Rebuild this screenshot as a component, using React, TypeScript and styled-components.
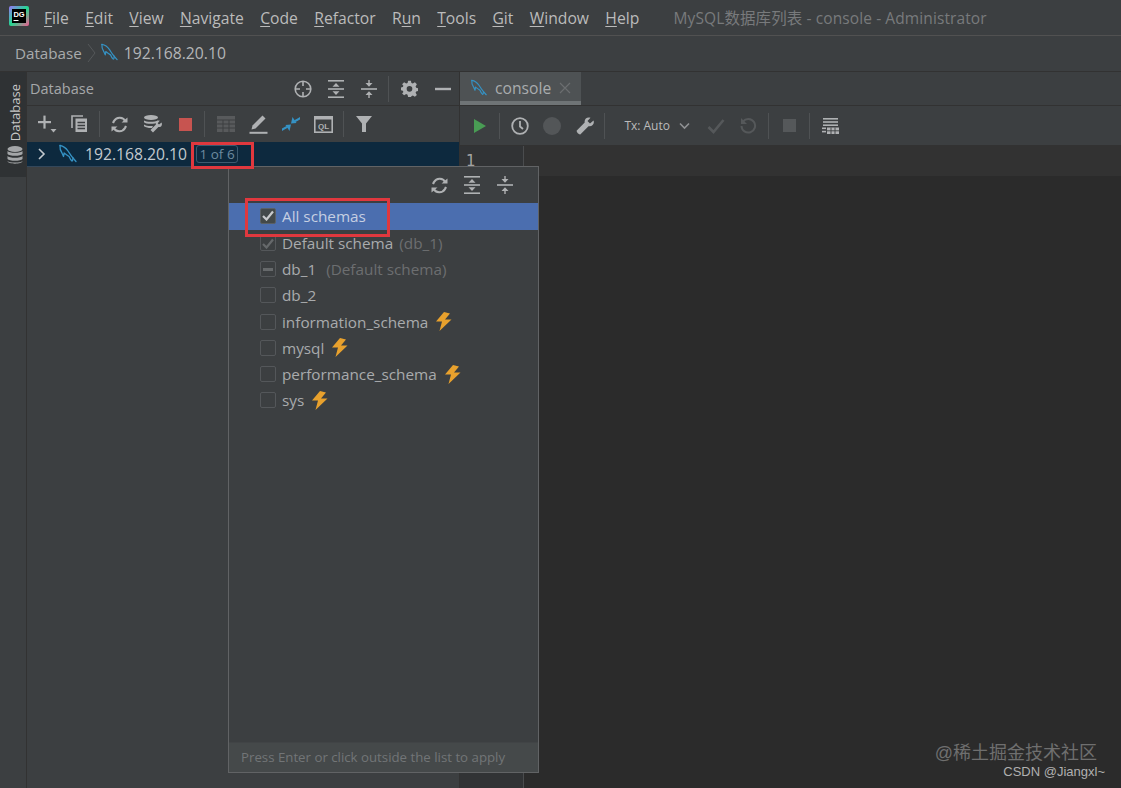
import React from "react"
import styled, { createGlobalStyle } from "styled-components"

const GlobalStyle = createGlobalStyle`
  html, body { margin: 0; height: 100%; background: #3c3f41; overflow: hidden; }
  #root { height: 100%; }
  * { box-sizing: border-box; }
`

const FONT = `"Open Sans", "Noto Sans", "Noto Sans CJK SC", sans-serif`

const Root = styled.div`
  position: relative;
  height: 788px;
  width: 1121px;
  display: flex;
  flex-direction: column;
  overflow: hidden;
  background: #3c3f41;
  color: #bbbbbb;
  font-family: ${FONT};
`

/* menu bar */
const MenuBar = styled.div`
  height: 36px;
  flex: none;
  display: flex;
  align-items: center;
  padding-left: 9px;
  border-bottom: 1px solid #515151;
  font-size: 15.7px;
`
const Logo = styled.svg`
  width: 20px;
  height: 20px;
  margin-right: 15px;
  margin-top: -4px;
`
const MenuItem = styled.span`
  margin-right: 16.3px;
  color: #bbbbbb;
  u { text-underline-offset: 2px; text-decoration-thickness: 1px; }
`
const WindowTitle = styled.span`
  margin-left: 18px;
  color: #787a7c;
  font-size: 15.5px;
  letter-spacing: 0.1px;
`

/* breadcrumb */
const Breadcrumb = styled.div`
  height: 36px;
  flex: none;
  display: flex;
  align-items: center;
  padding: 0 0 2px 15px;
  border-bottom: 1px solid #323232;
  font-size: 15.2px;
  color: #a9abad;
`
const CrumbArrow = styled.svg`
  width: 10px;
  height: 20px;
  margin: 0 3px 0 5px;
`
const CrumbHost = styled.span`
  margin-left: 5px;
  font-size: 15.7px;
  color: #b4b6b8;
`

/* main area */
const Main = styled.div`
  flex: 1;
  display: flex;
  min-height: 0;
`
const Strip = styled.div`
  width: 27px;
  flex: none;
  border-right: 1px solid #323232;
`
const StripTab = styled.div`
  height: 105px;
  background: #2f3234;
  display: flex;
  flex-direction: column;
  align-items: center;
  justify-content: flex-end;
  gap: 5px;
  padding: 0 0 13px 3px;
`
const StripLabel = styled.span`
  writing-mode: vertical-rl;
  transform: rotate(180deg);
  font-size: 13px;
  color: #c8c8c8;
`
const ToolWindow = styled.div`
  width: 433px;
  flex: none;
  display: flex;
  flex-direction: column;
  border-right: 1px solid #323232;
`
const ToolHeader = styled.div`
  height: 34px;
  flex: none;
  display: flex;
  align-items: center;
  padding-left: 3px;
  border-bottom: 1px solid #323232;
`
const ToolTitle = styled.span`
  flex: 1;
  font-size: 14.5px;
  color: #a6a8aa;
`
const Toolbar = styled.div<{ $height: number; $pad: number }>`
  height: ${p => p.$height}px;
  flex: none;
  display: flex;
  align-items: center;
  padding-left: ${p => p.$pad}px;
`
const IconSlot = styled.span<{ $w?: number }>`
  width: ${p => p.$w ?? 32.6}px;
  height: 24px;
  flex: none;
  display: flex;
  align-items: center;
  justify-content: center;
`
const Sep = styled.span`
  width: 1px;
  height: 26px;
  background: #4f5254;
  margin: 0 4px 0 3px;
  flex: none;
`
const TreeRow = styled.div`
  height: 25px;
  flex: none;
  display: flex;
  align-items: center;
  background: #0d293e;
  padding-left: 10px;
  border-bottom: 1px solid #33475a;
  font-size: 15.7px;
  color: #c3c9ce;
`
const TreeIcon = styled.span`
  margin-left: 12px;
  display: flex;
`
const TreeHost = styled.span`
  margin-left: 7px;
`
const CountBadge = styled.span`
  margin-left: 9px;
  height: 18px;
  width: 42px;
  flex: none;
  border: 1px solid #3c5a70;
  border-radius: 3px;
  font-size: 13.5px;
  color: #6e8ba0;
  display: flex;
  align-items: center;
  justify-content: center;
  white-space: nowrap;
`
const Editor = styled.div`
  flex: 1;
  display: flex;
  flex-direction: column;
  min-width: 0;
`
const TabBar = styled.div`
  height: 34px;
  flex: none;
  display: flex;
  border-bottom: 1px solid #323232;
`
const Tab = styled.div`
  width: 121px;
  display: flex;
  align-items: center;
  gap: 7px;
  padding: 3px 0 0 10px;
  background: #4e5254;
  border-bottom: 4px solid #6f7476;
  font-size: 15.7px;
  color: #a9acae;
`
const TabClose = styled.svg`
  width: 12px;
  height: 12px;
  margin-left: 1px;
`
const TxLabel = styled.span`
  font-size: 12px;
  color: #bbbbbb;
  margin-left: 15px;
  width: 45px;
  flex: none;
  white-space: nowrap;
`
const CodeArea = styled.div`
  flex: 1;
  display: flex;
  border-top: 1px solid #323232;
  min-height: 0;
`
const Gutter = styled.div`
  width: 64px;
  flex: none;
  background: #313335;
  border-right: 1px solid #4a4c4e;
  padding: 6px 0 0 6px;
  font-size: 15px;
  color: #a4a3a3;
  font-family: "DejaVu Sans", sans-serif;
`
const CodeBody = styled.div`
  flex: 1;
  background: #2b2b2b;
`
const CaretLine = styled.div`
  height: 30px;
  background: #323232;
`

/* schema popup */
const Popup = styled.div`
  position: absolute;
  left: 228px;
  top: 166px;
  width: 311px;
  height: 607px;
  background: #3c3f41;
  border: 1px solid #616365;
  display: flex;
  flex-direction: column;
`
const PopupHead = styled.div`
  height: 36px;
  flex: none;
  display: flex;
  align-items: center;
  justify-content: flex-end;
  padding-right: 17px;
`
const SchemaList = styled.div`
  flex: 1;
`
const SchemaRow = styled.div<{ $selected?: boolean }>`
  height: ${p => (p.$selected ? 27 : 26.2)}px;
  display: flex;
  align-items: center;
  gap: 6px;
  padding: 0 0 ${p => (p.$selected ? 2 : 0)}px 31px;
  font-size: 15.3px;
  white-space: nowrap;
  background: ${p => (p.$selected ? "#4b6eaf" : "transparent")};
  color: ${p => (p.$selected ? "#c6cfe2" : "#a9abad")};
`
const Hint = styled.span<{ $gap?: number }>`
  color: #6c6e70;
  margin-left: ${p => p.$gap ?? 0}px;
`
const CheckBox = styled.span<{ $tone: "on" | "dim" | "off" }>`
  width: 16px;
  height: 16px;
  flex: none;
  border-radius: 2px;
  display: flex;
  align-items: center;
  justify-content: center;
  background: ${p => (p.$tone === "on" ? "#43494a" : "transparent")};
  border: 1px solid ${p => (p.$tone === "on" ? "#5a6066" : "#54575a")};
`
const PopupFoot = styled.div`
  height: 30px;
  flex: none;
  display: flex;
  align-items: center;
  padding: 0 0 1px 12px;
  background: #45494a;
  border-top: 1px solid #414446;
  font-size: 13.25px;
  color: #727577;
`
const RedBox = styled.div<{ $l: number; $t: number; $w: number; $h: number }>`
  position: absolute;
  left: ${p => p.$l}px;
  top: ${p => p.$t}px;
  width: ${p => p.$w}px;
  height: ${p => p.$h}px;
  border: 3px solid #e0383e;
  pointer-events: none;
`
const Mark = styled.span<{ $r: number; $b: number; $size: number; $color: string }>`
  position: absolute;
  right: ${p => p.$r}px;
  bottom: ${p => p.$b}px;
  font-size: ${p => p.$size}px;
  color: ${p => p.$color};
  white-space: nowrap;
  font-family: "Liberation Sans", "Noto Sans CJK SC", sans-serif;
`

/* drawings */
const G = "#afb1b3"

const Dolphin = ({ size = 19 }: { size?: number }) => (
  <svg width={size} height={size} viewBox="0 0 20 20" fill="none" stroke="#3592c4" strokeWidth="1.3" strokeLinecap="round" strokeLinejoin="round">
    <path d="M2 1.5C5 2 8 4 10 7c1.5 2.2 3 5 5 7l3 3.5" />
    <path d="M2 1.5c-.3 3 .6 5.6 2 7.5l1.5 3.5c.4-1.5.6-2.5.6-3.5 1.6 1.2 3.4 2.5 5 3.5l1.5 3 1.4 1.5" />
    <path d="M15 14l-.4 2.5" />
  </svg>
)
const Target = () => (
  <svg width="18" height="18" viewBox="0 0 18 18" fill="none" stroke={G} strokeWidth="1.6">
    <circle cx="9" cy="9" r="7.8" />
    <path d="M9 1v5M9 12v5M1 9h5M12 9h5" />
  </svg>
)
const ExpandAll = () => (
  <svg width="16" height="18" viewBox="0 0 16 18" fill={G}>
    <rect x="0" y="0" width="16" height="1.6" />
    <rect x="0" y="16.4" width="16" height="1.6" />
    <rect x="0" y="8.2" width="16" height="1.6" />
    <path d="M8 3l3.5 3.8h-7zM8 15l3.5-3.8h-7z" />
  </svg>
)
const CollapseAll = () => (
  <svg width="16" height="18" viewBox="0 0 16 18" fill={G}>
    <rect x="0" y="8.2" width="16" height="1.6" />
    <path d="M8 6.8L4.5 3h7zM8 11.2L4.5 15h7z" />
    <rect x="7.3" y="0" width="1.4" height="3.5" />
    <rect x="7.3" y="14.5" width="1.4" height="3.5" />
  </svg>
)
const Gear = () => (
  <svg width="17" height="17" viewBox="0 0 24 24" fill={G}>
    <path d="M10 1h4l.7 3.3 2 .8 2.900-1.800 2.800 2.800-1.800 2.900.8 2 2.600.7v4l-2.600.7-.8 1.700 1.800 2.900-2.800 2.800-2.900-1.800-2 .8L14 24h-4l-.7-3.300-2-.8-2.900 1.800-2.800-2.800L3.400 17l-.8-1.700L0 14.600v-4l2.600-.6.800-2L1.600 6.100l2.800-2.800 2.900 1.800 2-.8zM12 8.500a4 4 0 100 8 4 4 0 000-8z" fillRule="evenodd" />
  </svg>
)
const Minus = () => (
  <svg width="16" height="4" viewBox="0 0 16 4"><rect width="16" height="2.4" y="0.8" fill={G} /></svg>
)
const PlusDrop = () => (
  <svg width="20" height="20" viewBox="0 0 20 20" fill={G}>
    <rect x="1" y="7" width="13" height="2.2" />
    <rect x="6.4" y="1.6" width="2.2" height="13" />
    <path d="M13.500 15h6l-3 3.500z" />
  </svg>
)
const CopyIcon = () => (
  <svg width="17" height="18" viewBox="0 0 17 18" fill="none" stroke={G} strokeWidth="1.6">
    <path d="M1 13V1h11" />
    <rect x="4.5" y="3.5" width="11.5" height="13.5" fill={G} stroke="none" />
    <path d="M6.500 7.500h7.500M6.500 10.500h7.500M6.500 13.500h7.500" stroke="#3c3f41" strokeWidth="1.3" />
  </svg>
)
const Refresh = () => (
  <svg width="17" height="17" viewBox="0 0 17 17" fill="none" stroke={G} strokeWidth="2.2">
    <path d="M14.500 5.500A6.500 6.500 0 003 5l-1 2" />
    <path d="M2.500 11.500A6.500 6.500 0 0014 12l1-2" />
    <path d="M10.500 6.500h6v-5zM6.500 10.500h-6v5z" fill={G} stroke="none" />
  </svg>
)
const DbWrench = () => (
  <svg width="20" height="20" viewBox="0 0 20 20" fill={G}>
    <ellipse cx="8" cy="3.5" rx="7" ry="2.5" />
    <path d="M1 6.500c2 1.800 11 1.800 14 0v1.800c-3 2-12 2-14 0zM1 10.500c2 1.600 6 1.800 9 1.500l-1 2c-3 .2-6-.4-8-1.700z" />
    <path d="M18.500 8.500l-2.500 2-1.300-1.300 2-2.400c-2-.8-4.500.8-3.800 3.800l-5.400 5.400 2.500 2.500 5.400-5.500c3 .5 4.300-2.200 3.100-4.500z" />
  </svg>
)
const Square = ({ color, s }: { color: string; s: number }) => (
  <svg width={s} height={s}><rect width={s} height={s} fill={color} /></svg>
)
const Dash = () => (
  <svg width="10" height="3"><rect width="10" height="3" fill="#66696b" /></svg>
)
const TableGrid = () => (
  <svg width="18" height="16" viewBox="0 0 18 16" fill="#585a5c">
    <rect width="18" height="16" />
    <path d="M0 4h18M0 8h18M0 12h18M6 4v12M12 4v12" stroke="#3c3f41" strokeWidth="1" />
  </svg>
)
const Pen = () => (
  <svg width="19" height="19" viewBox="0 0 19 19" fill={G}>
    <path d="M13.500 0.500l3 3L6.500 13.500l-4 1 1-4z" />
    <rect x="0.5" y="16.8" width="18" height="2" />
  </svg>
)
const Compare = () => (
  <svg width="20" height="18" viewBox="0 0 20 18" fill="#3592c4">
    <path d="M10 8.500L11.500 2l4 6z" />
    <path d="M13 5.500L19 2v2.500L14.500 7z" />
    <path d="M10 9.500L8.500 16l-4-6z" />
    <path d="M7 12.500L1 16v-2.500L5.500 11z" />
  </svg>
)
const QlIcon = () => (
  <svg width="19" height="17" viewBox="0 0 19 17">
    <rect x="0.8" y="0.8" width="17.4" height="15.4" fill="none" stroke={G} strokeWidth="1.6" />
    <rect x="0" y="0" width="19" height="3.5" fill={G} />
    <text x="9.5" y="12.5" textAnchor="middle" fontSize="8" fontWeight="700" fill={G} fontFamily="Liberation Sans, sans-serif">QL</text>
  </svg>
)
const Funnel = () => (
  <svg width="16" height="16" viewBox="0 0 16 16"><path d="M0 0h16l-6 7.500V16H6V7.500z" fill={G} /></svg>
)
const Chevron = ({ color = "#c3c9ce", w = 9 }: { color?: string; w?: number }) => (
  <svg width={w} height="12" viewBox="0 0 9 12" fill="none" stroke={color} strokeWidth="1.6"><path d="M2 1l5 5-5 5" /></svg>
)
const DownChevron = () => (
  <svg width="11" height="8" viewBox="0 0 11 8" fill="none" stroke="#8f9193" strokeWidth="1.6"><path d="M1 1.500l4.500 4.500L10 1.500" /></svg>
)
const Play = () => (
  <svg width="14" height="16" viewBox="0 0 14 16"><path d="M1 1l12 7-12 7z" fill="#499c54" /></svg>
)
const Clock = () => (
  <svg width="18" height="18" viewBox="0 0 18 18" fill="none" stroke={G} strokeWidth="1.8">
    <circle cx="9" cy="9" r="7.8" />
    <path d="M9 4v5.500l3 2.500" />
  </svg>
)
const Dot = () => (
  <svg width="18" height="18"><circle cx="9" cy="9" r="9" fill="#535658" /></svg>
)
const Wrench = () => (
  <svg width="18" height="18" viewBox="0 0 18 18" fill={G}>
    <path d="M17.500 3.500L14 6.500 11.500 4 14.500.8c-3-1.300-6.500.8-5.800 4.700L.8 13.500c-1 1.200 2.500 4.700 3.700 3.700l8-8c3.800.7 6.300-2.500 5-5.700z" />
  </svg>
)
const Check = () => (
  <svg width="18" height="16" viewBox="0 0 18 16" fill="none" stroke="#55585a" strokeWidth="2.6"><path d="M1.500 9l5 5L16.500 2" /></svg>
)
const Undo = () => (
  <svg width="17" height="17" viewBox="0 0 17 17" fill="none" stroke="#55585a" strokeWidth="2">
    <path d="M3 4.500A6.800 6.800 0 111.500 9" />
    <path d="M1 1v6h6z" fill="#55585a" stroke="none" />
  </svg>
)
const TableLines = () => (
  <svg width="17" height="16" viewBox="0 0 17 16" fill={G}>
    <rect x="1" y="0" width="15" height="1.6" />
    <rect x="1" y="3.2" width="15" height="1.6" />
    <rect x="1" y="6.4" width="15" height="1.6" />
    <rect x="0" y="9.5" width="4" height="1.6" />
    <rect x="0" y="12.8" width="4" height="1.6" />
    <rect x="5" y="9.5" width="12" height="6.5" />
    <path d="M5 12.800h12M9 9.500v6.500M13 9.500v6.500" stroke="#3c3f41" strokeWidth="0.9" />
  </svg>
)
const DbStack = () => (
  <svg width="16" height="18" viewBox="0 0 16 18" fill="#a4a6a8">
    <ellipse cx="8" cy="3" rx="7.5" ry="3" />
    <path d="M.5 5c1.500 2.400 13.500 2.400 15 0v3c-1.500 2.400-13.500 2.400-15 0zM.5 10c1.500 2.400 13.500 2.400 15 0v3c-1.500 2.400-13.500 2.400-15 0zM.5 15c1.500 2 13.500 2 15 0c0 3.500-15 3.500-15 0z" />
  </svg>
)
const Bolt = () => (
  <svg width="19" height="19" viewBox="0 0 19 19"><path d="M10 0L2 9.500h6L5.500 19l12-11.500h-6.500l5-6z" fill="#e8a12d" /></svg>
)
const Tick = ({ color }: { color: string }) => (
  <svg width="12" height="11" viewBox="0 0 12 11" fill="none" stroke={color} strokeWidth="2.2"><path d="M1 6l3.500 3.500L11 1.500" /></svg>
)

const MENU: [string, string, string][] = [
  ["", "F", "ile"], ["", "E", "dit"], ["", "V", "iew"], ["", "N", "avigate"], ["", "C", "ode"],
  ["", "R", "efactor"], ["R", "u", "n"], ["", "T", "ools"], ["", "G", "it"], ["", "W", "indow"], ["", "H", "elp"],
]

type Schema = { name: string; tone: "dim" | "off"; hint?: string; gap?: number; mark?: "tick" | "dash"; bolt?: boolean }

const SCHEMAS: Schema[] = [
  { name: "Default schema", tone: "dim", hint: "(db_1)", mark: "tick" },
  { name: "db_1", tone: "dim", hint: "(Default schema)", gap: 4, mark: "dash" },
  { name: "db_2", tone: "off" },
  { name: "information_schema", tone: "off", bolt: true },
  { name: "mysql", tone: "off", bolt: true },
  { name: "performance_schema", tone: "off", bolt: true },
  { name: "sys", tone: "off", bolt: true },
]

export default function App() {
  return (
    <Root>
      <GlobalStyle />
      <MenuBar>
        <Logo viewBox="0 0 20 20">
          <defs>
            <linearGradient id="dg" x1="0" y1="0" x2="1" y2="1">
              <stop offset="0" stopColor="#9775f8" />
              <stop offset="0.5" stopColor="#22d88f" />
              <stop offset="1" stopColor="#f45990" />
            </linearGradient>
          </defs>
          <rect width="20" height="20" rx="2" fill="url(#dg)" />
          <rect x="3" y="3" width="14" height="14" fill="#000" />
          <text x="10" y="11" textAnchor="middle" fontSize="7.5" fontWeight="700" fill="#fff" fontFamily="Liberation Sans, sans-serif">DG</text>
          <rect x="4.5" y="14" width="5" height="1" fill="#fff" />
        </Logo>
        {MENU.map(([a, u, b]) => (
          <MenuItem key={a + u + b}>{a}<u>{u}</u>{b}</MenuItem>
        ))}
        <WindowTitle>MySQL数据库列表 - console - Administrator</WindowTitle>
      </MenuBar>

      <Breadcrumb>
        Database
        <CrumbArrow viewBox="0 0 10 20" fill="none" stroke="#55585a"><path d="M1 1l7 9-7 9" /></CrumbArrow>
        <Dolphin />
        <CrumbHost>192.168.20.10</CrumbHost>
      </Breadcrumb>

      <Main>
        <Strip>
          <StripTab>
            <StripLabel>Database</StripLabel>
            <DbStack />
          </StripTab>
        </Strip>

        <ToolWindow>
          <ToolHeader>
            <ToolTitle>Database</ToolTitle>
            <IconSlot $w={33}><Target /></IconSlot>
            <IconSlot $w={33}><ExpandAll /></IconSlot>
            <IconSlot $w={33}><CollapseAll /></IconSlot>
            <Sep />
            <IconSlot $w={33}><Gear /></IconSlot>
            <IconSlot $w={33}><Minus /></IconSlot>
          </ToolHeader>
          <Toolbar $height={36} $pad={3.5}>
            <IconSlot><PlusDrop /></IconSlot>
            <IconSlot><CopyIcon /></IconSlot>
            <Sep />
            <IconSlot><Refresh /></IconSlot>
            <IconSlot><DbWrench /></IconSlot>
            <IconSlot><Square color="#c75450" s={13} /></IconSlot>
            <Sep />
            <IconSlot><TableGrid /></IconSlot>
            <IconSlot><Pen /></IconSlot>
            <IconSlot><Compare /></IconSlot>
            <IconSlot><QlIcon /></IconSlot>
            <Sep />
            <IconSlot><Funnel /></IconSlot>
          </Toolbar>
          <TreeRow>
            <Chevron />
            <TreeIcon><Dolphin size={20} /></TreeIcon>
            <TreeHost>192.168.20.10</TreeHost>
            <CountBadge>1 of 6</CountBadge>
          </TreeRow>
        </ToolWindow>

        <Editor>
          <TabBar>
            <Tab>
              <Dolphin size={18} />
              console
              <TabClose viewBox="0 0 12 12" stroke="#6b6e70" strokeWidth="1.2"><path d="M1 1l10 10M11 1L1 11" /></TabClose>
            </Tab>
          </TabBar>
          <Toolbar $height={39} $pad={5}>
            <IconSlot $w={30.6}><Play /></IconSlot>
            <Sep />
            <IconSlot><Clock /></IconSlot>
            <IconSlot><Dot /></IconSlot>
            <IconSlot><Wrench /></IconSlot>
            <Sep />
            <TxLabel>Tx: Auto</TxLabel>
            <IconSlot $w={30}><DownChevron /></IconSlot>
            <IconSlot $w={33}><Check /></IconSlot>
            <IconSlot $w={33}><Undo /></IconSlot>
            <Sep />
            <IconSlot $w={33}><Square color="#55585a" s={13} /></IconSlot>
            <Sep />
            <IconSlot><TableLines /></IconSlot>
          </Toolbar>
          <CodeArea>
            <Gutter>1</Gutter>
            <CodeBody><CaretLine /></CodeBody>
          </CodeArea>
        </Editor>
      </Main>

      <Popup>
        <PopupHead>
          <IconSlot $w={32}><Refresh /></IconSlot>
          <IconSlot $w={33}><ExpandAll /></IconSlot>
          <IconSlot $w={33}><CollapseAll /></IconSlot>
        </PopupHead>
        <SchemaList>
          <SchemaRow $selected>
            <CheckBox $tone="on"><Tick color="#c8cacc" /></CheckBox>
            All schemas
          </SchemaRow>
          {SCHEMAS.map(s => (
            <SchemaRow key={s.name}>
              <CheckBox $tone={s.tone}>
                {s.mark === "tick" && <Tick color="#66696b" />}
                {s.mark === "dash" && <Dash />}
              </CheckBox>
              {s.name}
              {s.hint && <Hint $gap={s.gap}>{s.hint}</Hint>}
              {s.bolt && <Bolt />}
            </SchemaRow>
          ))}
        </SchemaList>
        <PopupFoot>Press Enter or click outside the list to apply</PopupFoot>
      </Popup>

      <RedBox $l={191} $t={142} $w={63} $h={27} />
      <RedBox $l={245} $t={198} $w={145} $h={39} />

      <Mark $r={24} $b={24} $size={18} $color="#6f6f6f">@稀土掘金技术社区</Mark>
      <Mark $r={16} $b={9} $size={13} $color="#b0b0b0">CSDN @Jiangxl~</Mark>
    </Root>
  )
}
